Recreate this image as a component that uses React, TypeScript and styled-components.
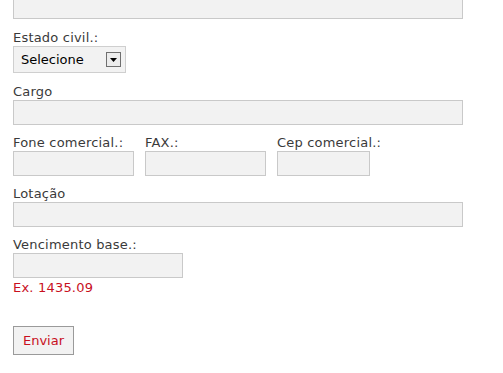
import React from "react";
import styled, { createGlobalStyle } from "styled-components";

const GlobalStyle = createGlobalStyle`
    body {
        margin: 0;
        background: #fff;
        font-family: "DejaVu Sans", Verdana, sans-serif;
        font-size: 13px;
        color: #333;
    }
`

const Form = styled.form`
    padding: 0 13px;
    margin-top: -6px;
    width: 450px;
`

const Field = styled.div<{ gap?: number }>`
    margin-bottom: ${({ gap }) => gap ?? 10}px;
`

const Row = styled.div`
    display: flex;
    gap: 11px;
    margin-bottom: 10px;
`

const Label = styled.label`
    display: block;
    height: 16px;
    line-height: 16px;
    letter-spacing: 0.2px;
    color: #3a3a3a;
`

const Input = styled.input<{ w?: number }>`
    display: block;
    box-sizing: border-box;
    width: ${({ w }) => (w ? w + "px" : "100%")};
    height: 25px;
    margin: 0;
    padding: 2px 4px;
    border: 1px solid #c9c9c9;
    background: #f2f2f2;
    font: inherit;
    outline: none;
`

const SelectWrap = styled.div`
    position: relative;
    width: 113px;
    height: 27px;
`

const Select = styled.select`
    box-sizing: border-box;
    width: 100%;
    height: 100%;
    margin: 0;
    padding: 0 0 0 7px;
    appearance: none;
    border: 1px solid #cfcfcf;
    border-radius: 0;
    background: #f2f2f2;
    color: #000;
    font-family: "DejaVu Sans", Verdana, sans-serif;
    font-size: 13px;
`

const Arrow = styled.span`
    position: absolute;
    left: 93px;
    top: 6px;
    box-sizing: border-box;
    width: 15px;
    height: 15px;
    border: 1px solid #6f6f6f;
    background: #ececec;
    pointer-events: none;
    display: flex;
    align-items: center;
    justify-content: center;
`

const Hint = styled.div`
    height: 16px;
    padding-top: 2px;
    line-height: 16px;
    letter-spacing: 0.2px;
    color: #c8101e;
`

const Button = styled.button`
    box-sizing: border-box;
    width: 61px;
    height: 29px;
    margin-top: 30px;
    padding: 0;
    border: 1px solid #9a9a9a;
    background: #f2f2f2;
    color: #c8101e;
    font-family: "DejaVu Sans", Verdana, sans-serif;
    font-size: 13px;
`

const App = () => {
    return (
        <>
            <GlobalStyle />
            <Form onSubmit={(e) => e.preventDefault()}>
                <Field gap={11}>
                    <Input />
                </Field>
                <Field gap={11}>
                    <Label>Estado civil.:</Label>
                    <SelectWrap>
                        <Select defaultValue="">
                            <option value="">Selecione</option>
                            <option value="solteiro">Solteiro(a)</option>
                            <option value="casado">Casado(a)</option>
                        </Select>
                        <Arrow>
                            <svg width="7" height="4" viewBox="0 0 7 4">
                                <path d="M0 0H7L3.5 4Z" fill="#000" />
                            </svg>
                        </Arrow>
                    </SelectWrap>
                </Field>
                <Field>
                    <Label>Cargo</Label>
                    <Input />
                </Field>
                <Row>
                    <div>
                        <Label>Fone comercial.:</Label>
                        <Input w={121} />
                    </div>
                    <div>
                        <Label>FAX.:</Label>
                        <Input w={121} />
                    </div>
                    <div>
                        <Label>Cep comercial.:</Label>
                        <Input w={93} />
                    </div>
                </Row>
                <Field>
                    <Label>Lotação</Label>
                    <Input />
                </Field>
                <div>
                    <Label>Vencimento base.:</Label>
                    <Input w={170} />
                    <Hint>Ex. 1435.09</Hint>
                </div>
                <Button type="submit">Enviar</Button>
            </Form>
        </>
    )
}

export default App;
